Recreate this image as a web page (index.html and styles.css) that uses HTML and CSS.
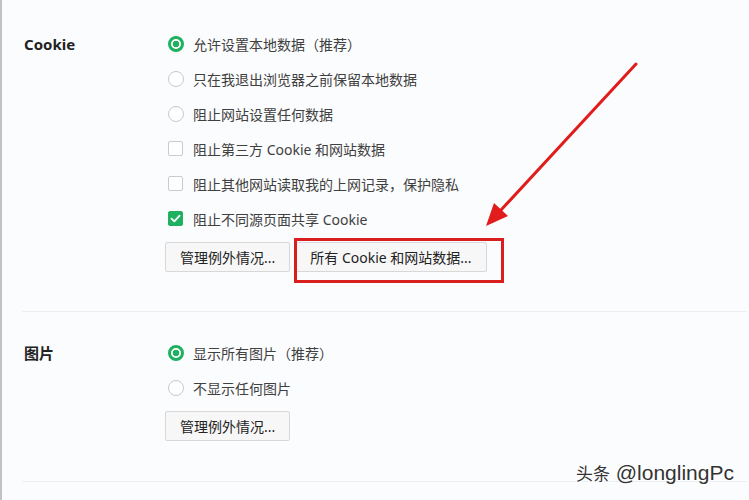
FILE: index.html
```html
<!DOCTYPE html>
<html lang="zh">
<head>
<meta charset="utf-8">
<link rel="stylesheet" href="styles.css">
</head>
<body>
<div class="page">
  <section class="section s1">
    <div class="label">Cookie</div>
    <div class="content">
      <div class="row"><span class="radio on"></span><span>允许设置本地数据（推荐）</span></div>
      <div class="row"><span class="radio"></span><span>只在我退出浏览器之前保留本地数据</span></div>
      <div class="row"><span class="radio"></span><span>阻止网站设置任何数据</span></div>
      <div class="row"><span class="check"></span><span>阻止第三方 Cookie 和网站数据</span></div>
      <div class="row"><span class="check"></span><span>阻止其他网站读取我的上网记录，保护隐私</span></div>
      <div class="row"><span class="check on"><svg viewBox="0 0 15 15" width="15" height="15"><path d="M3.5 7.6 L6.3 10.3 L11.6 4.6" fill="none" stroke="#fff" stroke-width="1.8" stroke-linecap="round" stroke-linejoin="round"/></svg></span><span>阻止不同源页面共享 Cookie</span></div>
      <div class="buttons">
        <button class="btn">管理例外情况...</button>
        <button class="btn">所有 Cookie 和网站数据...</button>
      </div>
    </div>
  </section>
  <section class="section s2">
    <div class="label">图片</div>
    <div class="content">
      <div class="row"><span class="radio on"></span><span>显示所有图片（推荐）</span></div>
      <div class="row"><span class="radio"></span><span>不显示任何图片</span></div>
      <div class="buttons">
        <button class="btn">管理例外情况...</button>
      </div>
    </div>
  </section>
  <div class="redbox"></div>
  <svg class="arrow" width="749" height="500" viewBox="0 0 749 500">
    <line x1="634" y1="64" x2="499" y2="210" stroke="#e01c1c" stroke-width="3" stroke-linecap="round"/>
    <polygon points="484,226 506,216 492,203" fill="#e01c1c"/>
  </svg>
  <div class="mark"><span class="cjk">头条</span> @longlingPc</div>
</div>
</body>
</html>
```

FILE: styles.css
```css
html, body {
  margin: 0;
  padding: 0;
  background: #fbfcfd;
}
.page {
  position: relative;
  width: 747px;
  height: 500px;
  border-left: 2px solid #c2c2c2;
  padding-left: 20px;
  box-sizing: border-box;
  overflow: hidden;
  font-family: "Noto Sans", "Noto Sans CJK SC", sans-serif;
  color: #333;
}
.section {
  display: grid;
  grid-template-columns: 141px 1fr;
  padding-left: 2px;
  border-bottom: 1px solid #eceef1;
}
.s1 {
  padding-top: 26px;
  padding-bottom: 39px;
}
.s2 {
  padding-top: 23px;
  padding-bottom: 40px;
}
.label {
  height: 35px;
  display: flex;
  align-items: center;
  font-size: 15px;
  font-weight: 700;
  color: #222;
}
.content {
  display: flex;
  flex-direction: column;
}
.row {
  height: 35px;
  display: flex;
  align-items: center;
  gap: 9px;
  font-size: 14px;
  color: #404040;
  padding-left: 3px;
}
.radio {
  width: 16px;
  height: 16px;
  box-sizing: border-box;
  border-radius: 50%;
  border: 1px solid #c9c9c9;
  background: #fff;
  flex: none;
}
.radio.on {
  border: 3px solid #1fb160;
  background: radial-gradient(circle, #1fb160 0 3px, #fff 3.6px);
}
.check {
  width: 15px;
  height: 15px;
  box-sizing: border-box;
  border: 1px solid #cbcbcb;
  border-radius: 2px;
  background: #fff;
  flex: none;
  margin-right: 1px;
}
.check.on {
  border-color: #1fb160;
  background: #1fb160;
}
.check svg {
  display: block;
  margin: -1px;
}
.buttons {
  display: flex;
  gap: 5px;
  margin-top: 6px;
}
.btn {
  height: 30px;
  padding: 0 14px;
  border: 1px solid #d8d8d8;
  border-radius: 2px;
  background: #f7f7f7;
  font-family: "Noto Sans", "Noto Sans CJK SC", sans-serif;
  font-size: 14px;
  color: #222;
}
.redbox {
  position: absolute;
  left: 292px;
  top: 238px;
  width: 210px;
  height: 45px;
  box-sizing: border-box;
  border: 3px solid #d91e1e;
}
.arrow {
  position: absolute;
  left: 0;
  top: 0;
}
.mark {
  position: absolute;
  right: 13px;
  top: 460px;
  font-family: "Liberation Sans", "Noto Sans CJK SC", sans-serif;
  font-size: 21px;
  color: #333;
  text-shadow: 1px 1px 0 #fff, -1px 0 0 #fff;
  white-space: nowrap;
}
.mark .cjk {
  font-family: "Noto Sans CJK SC", sans-serif;
  font-size: 17px;
}
```
